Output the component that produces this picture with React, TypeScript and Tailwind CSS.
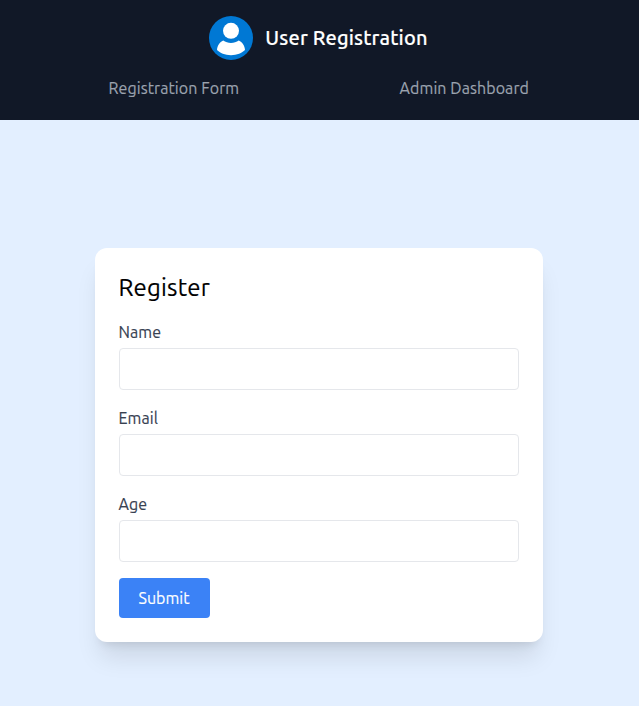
const fields = ["Name", "Email", "Age"];

function Avatar() {
  return (
    <svg viewBox="0 0 44 44" className="h-11 w-11 shrink-0">
      <circle cx="22" cy="22" r="22" fill="#0078d4" />
      <circle cx="22" cy="14.8" r="8" fill="#fff" />
      <path d="M14.2 24.6C10.8 26 8.2 30 8 34C11 37 16 39.2 22 39.2C28 39.2 33 37 36 34C35.8 30 33.2 26 29.8 24.6C25.3 27.9 18.7 27.9 14.2 24.6Z" fill="#fff" />
    </svg>
  );
}

export default function App() {
  return (
    <div className="flex min-h-screen flex-col bg-[#e3efff] font-['Ubuntu','Noto_Sans',sans-serif] [-webkit-text-stroke:0.15px_currentColor]">
      <header className="flex h-[120px] flex-col bg-[#111827] pt-4">
        <div className="flex items-center gap-3 pl-[209px]">
          <Avatar />
          <span className="ml-[0.3px] text-xl font-medium tracking-[0.17px] whitespace-nowrap text-white">User Registration</span>
        </div>
        <nav className="flex justify-between pt-4 pr-[110px] pl-[108.5px] tracking-[0.08px] text-[#9ca3af]">
          <a>Registration Form</a>
          <a>Admin Dashboard</a>
        </nav>
      </header>
      <main className="flex justify-center pt-32 pr-px">
        <form className="h-[394px] w-[448px] rounded-xl bg-white p-6 shadow-xl">
          <h2 className="mb-4 -ml-[0.5px] text-2xl tracking-[0.2px] text-black">Register</h2>
          {fields.map((f) => (
            <div key={f} className="mb-4">
              <label className="-ml-[0.5px] block leading-6 tracking-[0.08px] text-[#374151]">{f}</label>
              <input className="mt-1 block h-[42px] w-full rounded border border-[#e5e7eb] px-3" />
            </div>
          ))}
          <button type="button" className="h-10 w-[91px] rounded bg-[#3b82f6] pr-[1px] text-white">Submit</button>
        </form>
      </main>
    </div>
  );
}
